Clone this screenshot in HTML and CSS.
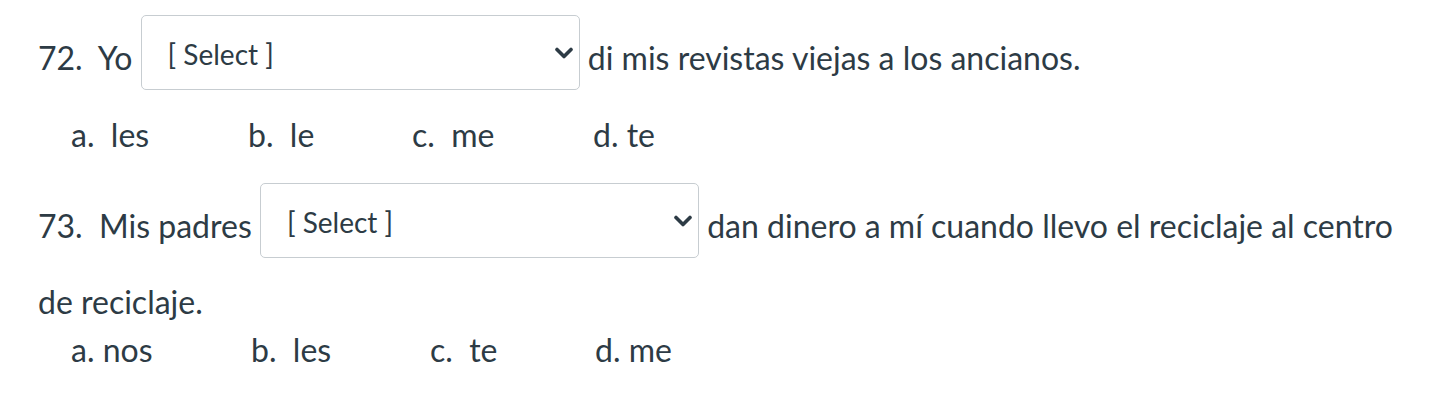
FILE: index.html
```html
<!DOCTYPE html>
<html>
<head>
<meta charset="utf-8">
<link rel="stylesheet" href="styles.css">
</head>
<body>
<div class="quiz">
  <p class="q q1">72.&nbsp; Yo <span class="sel"><span class="sel-text">[ Select ]</span><svg class="chev" viewBox="0 0 20 12" width="20" height="12"><path d="M3 2.5 L10 9.5 L17 2.5" fill="none" stroke="#2d3b45" stroke-width="3.6" stroke-linecap="round" stroke-linejoin="round"/></svg></span> di mis revistas viejas a los ancianos.</p>
  <div class="opts opts1">
    <span class="o" style="width:177px">a.&nbsp; les</span>
    <span class="o" style="width:164px">b.&nbsp; le</span>
    <span class="o" style="width:181px">c.&nbsp; me</span>
    <span class="o">d. te</span>
  </div>
  <p class="q q2"><span>73.&nbsp; Mis padres</span> <span class="sel"><span class="sel-text">[ Select ]</span><svg class="chev" viewBox="0 0 20 12" width="20" height="12"><path d="M3 2.5 L10 9.5 L17 2.5" fill="none" stroke="#2d3b45" stroke-width="3.6" stroke-linecap="round" stroke-linejoin="round"/></svg></span> <span>dan dinero a mí cuando llevo el reciclaje al centro</span><br><span>de reciclaje.</span></p>
  <div class="opts opts2">
    <span class="o" style="width:180px">a. nos</span>
    <span class="o" style="width:179px">b.&nbsp; les</span>
    <span class="o" style="width:165px">c.&nbsp; te</span>
    <span class="o">d. me</span>
  </div>
</div>
</body>
</html>
```
FILE: styles.css
```css
html, body {
  margin: 0;
  padding: 0;
  background: #ffffff;
}
body {
  font-family: Lato, "Liberation Sans", sans-serif;
  color: #2d3b45;
  font-size: 32px;
}
.quiz {
  padding: 20px 0 0 38px;
  width: 1380px;
}
.q {
  margin: 0;
  line-height: 76px;
}
.q2 {
  margin-top: 33px;
}
.sel {
  display: inline-flex;
  align-items: center;
  justify-content: space-between;
  box-sizing: border-box;
  width: 439px;
  height: 75px;
  margin: -15px 0;
  border: 1.5px solid #c7cdd1;
  border-radius: 5px;
  padding: 0 5px 0 26px;
  vertical-align: middle;
  font-size: 28px;
  line-height: 34px;
  position: relative;
  top: -9px;
}
.sel-text {
  position: relative;
  top: 1px;
}
.chev {
  position: relative;
  top: 0;
}
.opts {
  display: flex;
  padding-left: 33px;
  line-height: 40px;
}
.o {
  display: inline-block;
  white-space: pre;
}
.opts1 {
  margin-top: 19px;
}
.opts2 {
  margin-top: -10px;
}
```
